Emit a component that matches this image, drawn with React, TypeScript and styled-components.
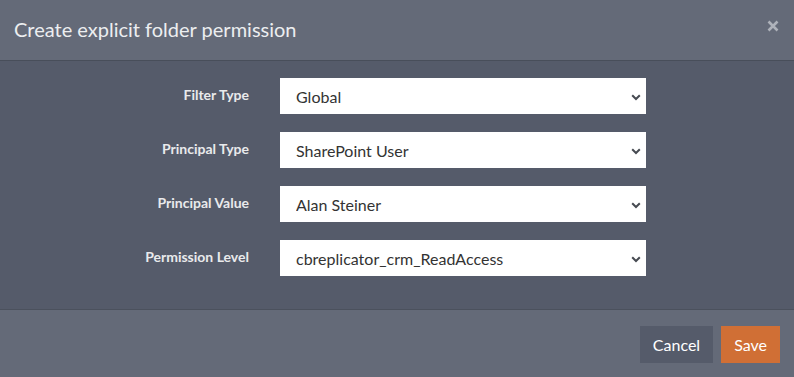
import styled, { createGlobalStyle } from 'styled-components';

const GlobalStyle = createGlobalStyle`
  html, body {
    margin: 0;
    padding: 0;
    background: #555b6a;
    font-family: Lato, "Liberation Sans", sans-serif;
  }
  * {
    box-sizing: border-box;
  }
`;

interface Field {
  label: string;
  value: string;
}

const fields: Field[] = [
  { label: 'Filter Type', value: 'Global' },
  { label: 'Principal Type', value: 'SharePoint User' },
  { label: 'Principal Value', value: 'Alan Steiner' },
  { label: 'Permission Level', value: 'cbreplicator_crm_ReadAccess' },
];

export default function App() {
  return (
    <>
      <GlobalStyle />
      <Dialog>
        <Header>
          <Title>Create explicit folder permission</Title>
          <CloseButton aria-label="Close">
            <svg width="12" height="12" viewBox="0 0 12 12">
              <path
                d="M1.5 1.5 L10.5 10.5 M10.5 1.5 L1.5 10.5"
                stroke="#aeb2ba"
                strokeWidth="2.6"
              />
            </svg>
          </CloseButton>
        </Header>
        <Body>
          {fields.map((field) => (
            <Row key={field.label}>
              <Label>{field.label}</Label>
              <SelectWrap>
                <Select defaultValue={field.value}>
                  <option>{field.value}</option>
                </Select>
                <Chevron width="10" height="7" viewBox="0 0 10 7">
                  <path
                    d="M1.2 1.2 L5 5 L8.8 1.2"
                    fill="none"
                    stroke="#474b52"
                    strokeWidth="2"
                  />
                </Chevron>
              </SelectWrap>
            </Row>
          ))}
        </Body>
        <Footer>
          <Button variant="default">Cancel</Button>
          <Button variant="primary">Save</Button>
        </Footer>
      </Dialog>
    </>
  );
}

const Dialog = styled.div`
  width: 794px;
  height: 377px;
  display: flex;
  flex-direction: column;
  background: #555b6a;
`;

const Header = styled.header`
  height: 61px;
  flex-shrink: 0;
  display: flex;
  align-items: center;
  justify-content: space-between;
  padding: 0 15px 2px 14px;
  background: #646a78;
  border-bottom: 1px solid #484e5a;
`;

const Title = styled.h4`
  margin: 0;
  font-size: 20px;
  font-weight: 400;
  color: #eceef0;
`;

const CloseButton = styled.button`
  border: none;
  background: none;
  padding: 0;
  margin-top: -6px;
  display: flex;
  cursor: pointer;
`;

const Body = styled.main`
  flex: 1;
  display: flex;
  flex-direction: column;
  gap: 18px;
  padding: 17px 0 0 0;
`;

const Row = styled.div`
  display: flex;
  align-items: center;
  height: 36px;
`;

const Label = styled.label`
  width: 249px;
  text-align: right;
  padding-bottom: 4px;
  font-size: 14px;
  font-weight: 700;
  color: #e9eaec;
`;

const SelectWrap = styled.div`
  position: relative;
  margin-left: 31px;
  width: 366px;
  height: 36px;
`;

const Select = styled.select`
  appearance: none;
  width: 100%;
  height: 100%;
  border: none;
  border-radius: 0;
  background: #ffffff;
  padding: 0 30px 0 16px;
  font-family: Lato, "Liberation Sans", sans-serif;
  font-size: 16px;
  color: #333333;
  outline: none;
`;

const Chevron = styled.svg`
  position: absolute;
  right: 5px;
  top: 16px;
  pointer-events: none;
`;

const Footer = styled.footer`
  height: 68px;
  flex-shrink: 0;
  display: flex;
  justify-content: flex-end;
  align-items: flex-start;
  gap: 8px;
  padding: 16px 14px 0 0;
  background: #646a78;
  border-top: 1px solid #4b515d;
`;

const Button = styled.button<{ variant: 'default' | 'primary' }>`
  height: 37px;
  padding: 0 13px;
  border: none;
  border-radius: 0;
  font-family: Lato, "Liberation Sans", sans-serif;
  font-size: 16px;
  color: #ffffff;
  cursor: pointer;
  background: ${(props) => (props.variant === 'primary' ? '#d06f35' : '#555b6a')};
`;
